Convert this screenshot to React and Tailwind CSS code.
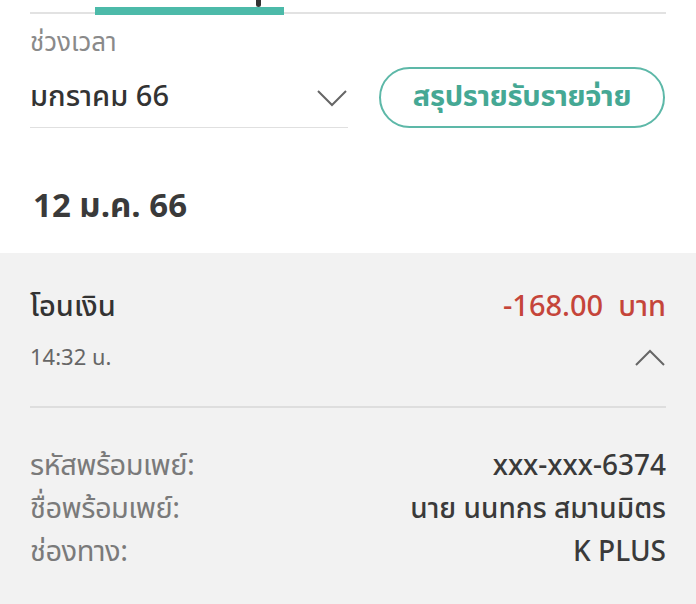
import React from 'react';

const font = { fontFamily: '"Noto Sans Thai", "Noto Sans", "Liberation Sans", sans-serif' };

function Chevron({ up }) {
    return (
        <svg width="32" height="18" viewBox="0 0 32 18" fill="none">
            <path
                d={up ? 'M2 16 L16 2 L30 16' : 'M2 2 L16 16 L30 2'}
                stroke="#666"
                strokeWidth="2"
            />
        </svg>
    );
}

function DetailRow({ label, value }) {
    return (
        <div className="flex justify-between items-center h-[43px]">
            <span className="text-[29px] text-[#7a7a7a] tracking-[-0.5px]">{label}</span>
            <span className="text-[28px] font-medium text-[#3a3a3a]">{value}</span>
        </div>
    );
}

export default function App() {
    return (
        <div className="w-[696px] h-[604px] bg-white overflow-hidden" style={font}>
            <div className="px-[30px] relative h-[15px]">
                <div className="border-b-2 border-[#e2e2e2] h-[14px]"></div>
                <div className="absolute left-[95px] top-[7px] w-[189px] h-[8px] bg-[#4cbaa9]"></div>
                <div className="absolute left-[256px] top-0 w-[5px] h-[7px] bg-[#333] rounded-b-sm"></div>
            </div>

            <div className="px-[30px] pt-[12px]">
                <div className="text-[26px] text-[#8a8a8a] leading-[32px]">ช่วงเวลา</div>
                <div className="flex items-center gap-[31px] mt-[8px]">
                    <div className="w-[318px] h-[52px] border-b border-[#e0e0e0] flex justify-between items-center pb-[6px]">
                        <span className="text-[29px] font-medium text-[#333]">มกราคม 66</span>
                        <Chevron />
                    </div>
                    <button className="w-[286px] h-[61px] rounded-full border-2 border-[#5db8a8] text-[#45a894] text-[29px] font-bold mb-[8px] tracking-[-0.3px]">
                        สรุปรายรับรายจ่าย
                    </button>
                </div>
            </div>

            <div className="px-[33px] h-[117px] flex items-center pt-[26px]">
                <span className="text-[33px] font-bold text-[#3a3a3a]">12 ม.ค. 66</span>
            </div>

            <div className="bg-[#f2f2f2] h-[360px] px-[30px]">
                <div className="pt-[33px] flex justify-between items-center">
                    <span className="text-[29px] font-medium text-[#333]">โอนเงิน</span>
                    <span className="text-[29px] font-medium text-[#c5453a] whitespace-pre">-168.00  บาท</span>
                </div>
                <div className="flex justify-between items-center mt-[12px]">
                    <span className="text-[22px] text-[#666]">14:32 น.</span>
                    <Chevron up />
                </div>
                <div className="border-b-2 border-[#dedede] mt-[31px]"></div>
                <div className="pt-[38px]">
                    <DetailRow label="รหัสพร้อมเพย์:" value="xxx-xxx-6374" />
                    <DetailRow label="ชื่อพร้อมเพย์:" value="นาย นนทกร สมานมิตร" />
                    <DetailRow label="ช่องทาง:" value="K PLUS" />
                </div>
            </div>
        </div>
    );
}
